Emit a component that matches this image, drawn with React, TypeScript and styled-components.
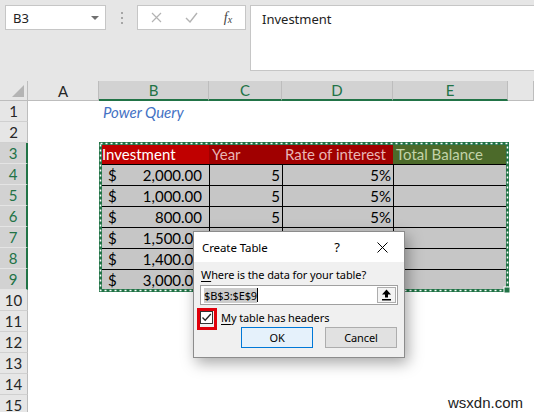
import React from "react";
import styled, { createGlobalStyle } from "styled-components";

const GREEN = "#217346";

const GlobalStyle = createGlobalStyle`
  html, body {
    margin: 0;
    padding: 0;
    background: #fff;
  }
  body {
    overflow: hidden;
  }
`;

const Page = styled.div`
  position: relative;
  width: 534px;
  height: 412px;
  overflow: hidden;
  background: #fff;
`;

/* ---------- formula bar ---------- */

const Toolbar = styled.div`
  display: flex;
  align-items: flex-start;
  height: 81px;
  box-sizing: border-box;
  padding: 5px 0 0 5px;
  background: #e6e6e6;
  font-family: "Noto Sans", sans-serif;
`;

const NameBox = styled.div`
  width: 101px;
  height: 25px;
  box-sizing: border-box;
  display: flex;
  align-items: center;
  justify-content: space-between;
  padding: 0 6px 0 7px;
  background: #fff;
  border: 1px solid #c6c6c6;
  font-size: 13px;
  color: #222;
`;

const Caret = styled.span`
  width: 0;
  height: 0;
  border-left: 4px solid transparent;
  border-right: 4px solid transparent;
  border-top: 4px solid #707070;
`;

const Grip = styled.div`
  display: flex;
  flex-direction: column;
  gap: 3px;
  margin: 7px 0 0 15px;
  span {
    width: 2px;
    height: 2px;
    background: #a6a6a6;
  }
`;

const FxBox = styled.div`
  width: 109px;
  height: 25px;
  margin-left: 14px;
  box-sizing: border-box;
  display: grid;
  grid-template-columns: 36px 35px 38px;
  align-items: center;
  justify-items: center;
  background: #fff;
  border: 1px solid #c6c6c6;
`;

const Fx = styled.span`
  font-family: "Liberation Serif", serif;
  font-style: italic;
  font-size: 14px;
  color: #444;
  sub {
    font-size: 10px;
    vertical-align: -1px;
  }
`;

const FormulaBar = styled.div`
  flex: 1;
  height: 66px;
  margin: 0 -10px 0 4px;
  box-sizing: border-box;
  padding: 3px 11px;
  background: #fff;
  border: 1px solid #c6c6c6;
  font-size: 13px;
  line-height: 20px;
  color: #222;
`;

/* ---------- sheet grid ---------- */

const Sheet = styled.div`
  display: grid;
  grid-template-columns: 28px 71px 110px 73px 111px 115px 1fr;
  grid-template-rows: 20px repeat(15, 21px);
  font-family: Lato, "Liberation Sans", sans-serif;
  font-size: 15px;
  color: #000;
`;

const Corner = styled.div`
  grid-row: 1;
  grid-column: 1;
  display: flex;
  align-items: flex-end;
  justify-content: flex-end;
  padding: 0 3px 3px 0;
  box-sizing: border-box;
  background: #e6e6e6;
  border-right: 1px solid #bdbdbd;
  border-bottom: 1px solid #bdbdbd;
`;

const CornerMark = styled.span`
  width: 0;
  height: 0;
  border-left: 12px solid transparent;
  border-bottom: 12px solid #b4b4b4;
`;

const ColHead = styled.div<{ $col: number; $selected?: boolean }>`
  grid-row: 1;
  grid-column: ${(p) => p.$col};
  display: flex;
  align-items: center;
  justify-content: center;
  box-sizing: border-box;
  background: ${(p) => (p.$selected ? "#d2d2d2" : "#e6e6e6")};
  color: ${(p) => (p.$selected ? GREEN : "#262626")};
  border-right: 1px solid #bdbdbd;
  border-bottom: ${(p) => (p.$selected ? `2px solid ${GREEN}` : "1px solid #bdbdbd")};
`;

const RowHead = styled.div<{ $row: number; $selected?: boolean }>`
  grid-row: ${(p) => p.$row + 1};
  grid-column: 1;
  display: flex;
  align-items: center;
  justify-content: center;
  box-sizing: border-box;
  background: ${(p) => (p.$selected ? "#d2d2d2" : "#e6e6e6")};
  color: ${(p) => (p.$selected ? GREEN : "#262626")};
  border-bottom: 1px solid ${(p) => (p.$selected ? "#e4e4e4" : "#d0d0d0")};
  border-right: ${(p) => (p.$selected ? `2px solid ${GREEN}` : "1px solid #bdbdbd")};
`;

const Caption = styled.div`
  grid-row: 2;
  grid-column: 3 / 5;
  display: flex;
  align-items: center;
  padding-left: 4px;
  color: #4472c4;
  font-style: italic;
`;

const DataTable = styled.div`
  grid-row: 4 / 11;
  grid-column: 3 / 7;
  position: relative;
  display: grid;
  grid-template-columns: 110px 73px 111px 115px;
  grid-template-rows: repeat(7, 21px);
`;

const HeadCell = styled.div<{ $bg: string; $fg: string }>`
  display: flex;
  align-items: center;
  padding: 0 3px;
  white-space: nowrap;
  overflow: hidden;
  background: ${(p) => p.$bg};
  color: ${(p) => p.$fg};
`;

const ValueCell = styled.div<{ $first?: boolean; $money?: boolean }>`
  display: flex;
  align-items: center;
  justify-content: ${(p) => (p.$money ? "space-between" : "flex-end")};
  padding: ${(p) => (p.$money ? "0 7px 0 9px" : "0 2px 0 3px")};
  box-sizing: border-box;
  background: #c6c6c6;
  border-top: 1px solid #000;
  border-left: ${(p) => (p.$first ? "none" : "1px solid #000")};
  white-space: nowrap;
`;

const Marquee = styled.svg`
  position: absolute;
  left: 0;
  top: -1px;
  width: 411px;
  height: 152px;
  overflow: visible;
  pointer-events: none;
`;

/* ---------- dialog ---------- */

const Dialog = styled.div`
  position: absolute;
  left: 193px;
  top: 231px;
  width: 212px;
  height: 127px;
  box-sizing: border-box;
  display: flex;
  flex-direction: column;
  background: #f0f0f0;
  border: 1px solid #8c8c8c;
  box-shadow: 3px 5px 14px rgba(0, 0, 0, 0.35);
  font-family: "Noto Sans", sans-serif;
  font-size: 11px;
  letter-spacing: -0.1px;
  color: #000;
`;

const TitleBar = styled.div`
  height: 30px;
  display: flex;
  align-items: center;
  padding-left: 8px;
  background: #fff;
  font-size: 11.5px;
`;

const Title = styled.span`
  flex: 1;
`;

const HelpButton = styled.span`
  width: 30px;
  margin-right: 8px;
  text-align: center;
  font-size: 13px;
`;

const CloseButton = styled.span`
  width: 44px;
  height: 30px;
  display: flex;
  align-items: center;
  justify-content: center;
`;

const DialogBody = styled.div`
  flex: 1;
  display: flex;
  flex-direction: column;
  padding: 5px 6px 0 7px;
`;

const Prompt = styled.div`
  line-height: 16px;
`;

const Key = styled.span`
  text-decoration: underline;
  text-underline-offset: 2px;
`;

const RangeInput = styled.div`
  height: 20px;
  margin: 2px 0 0 -1px;
  box-sizing: border-box;
  display: flex;
  align-items: center;
  padding: 0 1px 0 3px;
  background: #fff;
  border: 1px solid #a0a0a0;
`;

const Selected = styled.span`
  background: #cccccc;
  line-height: 15px;
`;

const TextCaret = styled.span`
  width: 1px;
  height: 14px;
  background: #000;
`;

const CollapseButton = styled.span`
  margin-left: auto;
  width: 19px;
  height: 16px;
  box-sizing: border-box;
  display: flex;
  align-items: center;
  justify-content: center;
  background: #f4f4f4;
  border: 1px solid #adadad;
`;

const CheckRow = styled.div`
  display: flex;
  align-items: center;
  gap: 8px;
  margin: 5px 0 0 -1px;
  height: 14px;
`;

const CheckFrame = styled.span`
  position: relative;
  width: 13px;
  height: 13px;
  box-sizing: border-box;
  display: flex;
  align-items: center;
  justify-content: center;
  background: #fff;
  border: 1px solid #333;
  &::after {
    content: "";
    position: absolute;
    left: -4px;
    top: -4px;
    right: -5px;
    bottom: -7px;
    border: 3px solid #e0000b;
  }
`;

const ButtonRow = styled.div`
  display: flex;
  justify-content: flex-end;
  gap: 12px;
  margin: 3px 1px 0 0;
`;

const DialogButton = styled.span<{ $primary?: boolean }>`
  width: 72px;
  height: 21px;
  box-sizing: border-box;
  display: flex;
  align-items: center;
  justify-content: center;
  background: ${(p) => (p.$primary ? "#e5f1fb" : "#e1e1e1")};
  border: 1px solid ${(p) => (p.$primary ? "#0078d7" : "#adadad")};
`;

const Watermark = styled.div`
  position: absolute;
  right: 11px;
  bottom: 1px;
  font-family: "Liberation Sans", sans-serif;
  font-size: 15px;
  color: #222;
  text-shadow: 0 0 3px #fff;
`;

const columns = ["A", "B", "C", "D", "E"];

const rows = [
  { amount: "2,000.00", year: "5", rate: "5%" },
  { amount: "1,000.00", year: "5", rate: "5%" },
  { amount: "800.00", year: "5", rate: "5%" },
  { amount: "1,500.00", year: "5", rate: "5%" },
  { amount: "1,400.00", year: "5", rate: "5%" },
  { amount: "3,000.00", year: "5", rate: "5%" },
];

const App = () => {
  return (
    <Page>
      <GlobalStyle />
      <Toolbar>
        <NameBox>
          <span>B3</span>
          <Caret />
        </NameBox>
        <Grip>
          <span />
          <span />
          <span />
        </Grip>
        <FxBox>
          <svg width="11" height="11" viewBox="0 0 11 11">
            <path d="M1 1 L10 10 M10 1 L1 10" stroke="#b3b3b3" strokeWidth="1.2" />
          </svg>
          <svg width="13" height="11" viewBox="0 0 13 11">
            <path d="M1 6 L5 10 L12 1" stroke="#b3b3b3" strokeWidth="1.4" fill="none" />
          </svg>
          <Fx>
            f<sub>x</sub>
          </Fx>
        </FxBox>
        <FormulaBar>Investment</FormulaBar>
      </Toolbar>

      <Sheet>
        <Corner>
          <CornerMark />
        </Corner>
        {columns.map((c, i) => (
          <ColHead key={c} $col={i + 2} $selected={i > 0}>
            {c}
          </ColHead>
        ))}
        <ColHead $col={7} />
        {Array.from({ length: 15 }, (_, i) => (
          <RowHead key={i} $row={i + 1} $selected={i >= 2 && i <= 8}>
            {i + 1}
          </RowHead>
        ))}
        <Caption>Power Query</Caption>
        <DataTable>
          <HeadCell $bg="#c00000" $fg="#ffffff">
            Investment
          </HeadCell>
          <HeadCell $bg="#a00000" $fg="#e9b5b5">
            Year
          </HeadCell>
          <HeadCell $bg="#a00000" $fg="#e9b5b5">
            Rate of interest
          </HeadCell>
          <HeadCell $bg="#4c6a2a" $fg="#c3d3a8">
            Total Balance
          </HeadCell>
          {rows.map((r, i) => (
            <React.Fragment key={i}>
              <ValueCell $first $money>
                <span>$</span>
                <span>{r.amount}</span>
              </ValueCell>
              <ValueCell>{r.year}</ValueCell>
              <ValueCell>{r.rate}</ValueCell>
              <ValueCell />
            </React.Fragment>
          ))}
          <Marquee viewBox="0 0 411 152">
            <rect x="1.5" y="1.5" width="407" height="147" fill="none" stroke={GREEN} strokeWidth="3" />
            <rect
              x="1.5"
              y="1.5"
              width="407"
              height="147"
              fill="none"
              stroke="#fff"
              strokeWidth="1.5"
              strokeDasharray="2 3"
            />
            <rect x="405" y="145" width="6" height="6" fill={GREEN} stroke="#fff" strokeWidth="1" />
          </Marquee>
        </DataTable>
      </Sheet>

      <Dialog>
        <TitleBar>
          <Title>Create Table</Title>
          <HelpButton>?</HelpButton>
          <CloseButton>
            <svg width="11" height="11" viewBox="0 0 11 11">
              <path d="M0.5 0.5 L10.5 10.5 M10.5 0.5 L0.5 10.5" stroke="#000" strokeWidth="1" />
            </svg>
          </CloseButton>
        </TitleBar>
        <DialogBody>
          <Prompt>
            <Key>W</Key>here is the data for your table?
          </Prompt>
          <RangeInput>
            <Selected>$B$3:$E$9</Selected>
            <TextCaret />
            <CollapseButton>
              <svg width="11" height="12" viewBox="0 0 11 12">
                <path d="M5.5 0.5 L10 5.5 H7 V8.5 H4 V5.5 H1 Z" fill="#000" />
                <rect x="1" y="10" width="9" height="1.5" fill="#000" />
              </svg>
            </CollapseButton>
          </RangeInput>
          <CheckRow>
            <CheckFrame>
              <svg width="11" height="11" viewBox="0 0 11 11">
                <path d="M1.5 5.5 L4.2 8.3 L9.8 2" stroke="#222" strokeWidth="1.3" fill="none" />
              </svg>
            </CheckFrame>
            <span>
              <Key>M</Key>y table has headers
            </span>
          </CheckRow>
          <ButtonRow>
            <DialogButton $primary>OK</DialogButton>
            <DialogButton>Cancel</DialogButton>
          </ButtonRow>
        </DialogBody>
      </Dialog>

      <Watermark>wsxdn.com</Watermark>
    </Page>
  );
};

export default App;
